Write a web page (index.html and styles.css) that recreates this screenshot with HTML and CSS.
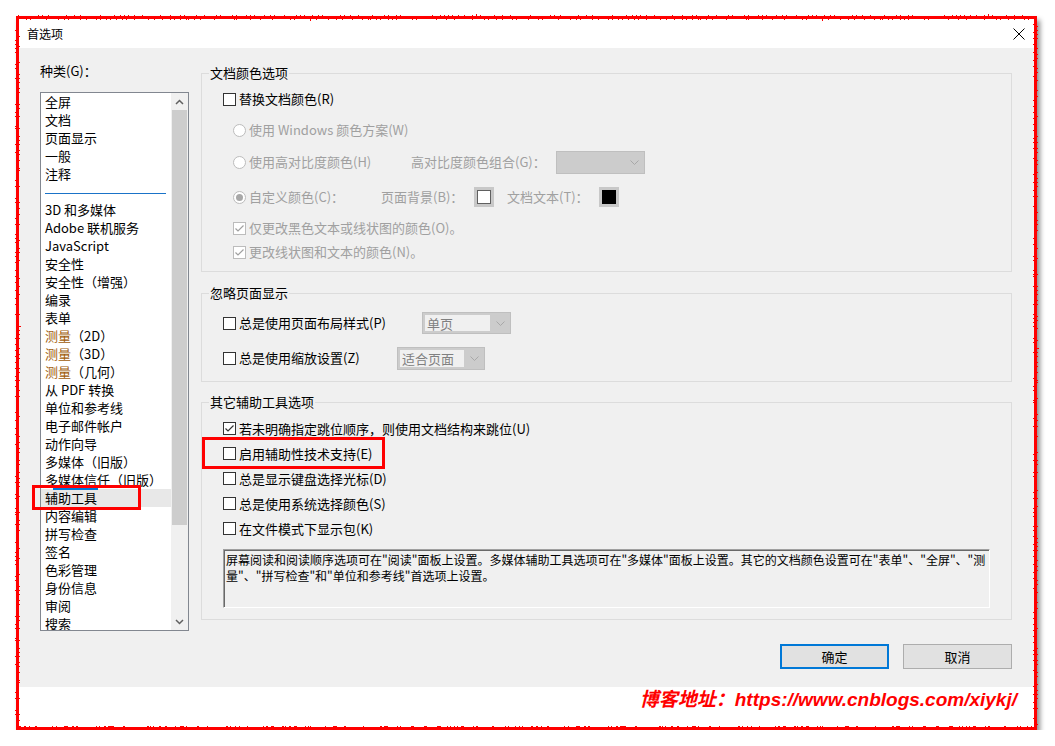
FILE: index.html
```html
<!DOCTYPE html>
<html lang="zh-CN">
<head>
  <meta charset="UTF-8" />
  <title>首选项</title>
  <link rel="stylesheet" href="styles.css">
</head>
<body>
  <!-- filtro para el borde rasgado -->
  <svg class="defs" width="0" height="0">
    <filter id="torn">
      <feTurbulence type="fractalNoise" baseFrequency="0.5" numOctaves="2" seed="7" result="noise" />
      <feDisplacementMap in="SourceGraphic" in2="noise" scale="5" xChannelSelector="R" yChannelSelector="G" result="rough" />
      <feMerge>
        <feMergeNode in="rough" />
        <feMergeNode in="SourceGraphic" />
      </feMerge>
    </filter>
  </svg>

  <div class="frame">
    <div class="titlebar">
      <span>首选项</span>
      <svg class="close" width="12" height="12" viewBox="0 0 12 12"><path d="M0.5 0.5 L11.5 11.5 M11.5 0.5 L0.5 11.5" stroke="#000" stroke-width="1" /></svg>
    </div>

    <div class="dialog">
      <div class="main">
        <!-- Categorías -->
        <div class="cat">
          <div class="cat-label">种类(G)：</div>
          <div class="list-box">
            <ul class="cat-list">
              <li>全屏</li>
              <li>文档</li>
              <li>页面显示</li>
              <li>一般</li>
              <li>注释</li>
              <li class="sep"></li>
              <li>3D 和多媒体</li>
              <li>Adobe 联机服务</li>
              <li>JavaScript</li>
              <li>安全性</li>
              <li>安全性（增强）</li>
              <li>编录</li>
              <li>表单</li>
              <li><span class="hl">测量</span>（2D）</li>
              <li><span class="hl">测量</span>（3D）</li>
              <li><span class="hl">测量</span>（几何）</li>
              <li>从 PDF 转换</li>
              <li>单位和参考线</li>
              <li>电子邮件帐户</li>
              <li>动作向导</li>
              <li>多媒体（旧版）</li>
              <li>多媒体信任（旧版）</li>
              <li class="sel">辅助工具</li>
              <li>内容编辑</li>
              <li>拼写检查</li>
              <li>签名</li>
              <li>色彩管理</li>
              <li>身份信息</li>
              <li>审阅</li>
              <li>搜索</li>
            </ul>
            <div class="scroll">
              <div class="arrow"><svg width="9" height="6" viewBox="0 0 9 6"><polyline points="1,5 4.5,1.5 8,5" fill="none" stroke="#606060" stroke-width="1.5" /></svg></div>
              <div class="thumb"></div>
              <div class="track"></div>
              <div class="arrow"><svg width="9" height="6" viewBox="0 0 9 6"><polyline points="1,1 4.5,4.5 8,1" fill="none" stroke="#606060" stroke-width="1.5" /></svg></div>
            </div>
          </div>
          <div class="mark mark-cat"></div>
        </div>

        <!-- Opciones -->
        <div class="opts">
          <div class="group g1">
            <div class="group-title">文档颜色选项</div>
            <div class="group-body">
              <div class="row"><span class="cb"></span><span>替换文档颜色(R)</span></div>
              <div class="row sub dis"><span class="rb"></span><span>使用 Windows 颜色方案(W)</span></div>
              <div class="row sub dis r3">
                <span class="rb"></span><span class="w159">使用高对比度颜色(H)</span>
                <span class="w145">高对比度颜色组合(G)：</span>
                <div class="combo w89"><span class="field empty"></span><span class="drop"><svg width="9" height="5" viewBox="0 0 9 5"><polyline points="0.5,0.5 4.5,4.5 8.5,0.5" fill="none" stroke="#a8a8a8" stroke-width="1" /></svg></span></div>
              </div>
              <div class="row sub dis r4">
                <span class="rb on"></span><span class="w132">自定义颜色(C)：</span>
                <span class="w93">页面背景(B)：</span>
                <span class="swatch"><i></i></span>
                <span class="w92 ml13">文档文本(T)：</span>
                <span class="swatch dark"><i></i></span>
              </div>
              <div class="pair">
                <div class="row sub dis"><span class="cb dis-cb"><svg width="11" height="11" viewBox="0 0 11 11"><polyline points="1.5,5.5 4,8 9.5,2.5" fill="none" stroke="#a0a0a0" stroke-width="1.2" /></svg></span><span>仅更改黑色文本或线状图的颜色(O)。</span></div>
                <div class="row sub dis"><span class="cb dis-cb"><svg width="11" height="11" viewBox="0 0 11 11"><polyline points="1.5,5.5 4,8 9.5,2.5" fill="none" stroke="#a0a0a0" stroke-width="1.2" /></svg></span><span>更改线状图和文本的颜色(N)。</span></div>
              </div>
            </div>
          </div>

          <div class="group g2">
            <div class="group-title">忽略页面显示</div>
            <div class="group-body">
              <div class="row">
                <span class="cb"></span><span class="w183">总是使用页面布局样式(P)</span>
                <div class="combo w89 h22"><span class="field">单页</span><span class="drop"><svg width="9" height="5" viewBox="0 0 9 5"><polyline points="0.5,0.5 4.5,4.5 8.5,0.5" fill="none" stroke="#a8a8a8" stroke-width="1" /></svg></span></div>
              </div>
              <div class="row">
                <span class="cb"></span><span class="w158">总是使用缩放设置(Z)</span>
                <div class="combo w88"><span class="field">适合页面</span><span class="drop"><svg width="9" height="5" viewBox="0 0 9 5"><polyline points="0.5,0.5 4.5,4.5 8.5,0.5" fill="none" stroke="#a8a8a8" stroke-width="1" /></svg></span></div>
              </div>
            </div>
          </div>

          <div class="group g3">
            <div class="group-title">其它辅助工具选项</div>
            <div class="group-body">
              <div class="row"><span class="cb"><svg width="11" height="11" viewBox="0 0 11 11"><polyline points="1.5,5.5 4,8 9.5,2.5" fill="none" stroke="#333" stroke-width="1.2" /></svg></span><span>若未明确指定跳位顺序，则使用文档结构来跳位(U)</span></div>
              <div class="row marked"><span class="cb"></span><span>启用辅助性技术支持(E)</span><div class="mark mark-row"></div></div>
              <div class="row"><span class="cb"></span><span>总是显示键盘选择光标(D)</span></div>
              <div class="row"><span class="cb"></span><span>总是使用系统选择颜色(S)</span></div>
              <div class="row"><span class="cb"></span><span>在文件模式下显示包(K)</span></div>
              <div class="info">屏幕阅读和阅读顺序选项可在"阅读"面板上设置。多媒体辅助工具选项可在"多媒体"面板上设置。其它的文档颜色设置可在"表单"、"全屏"、"测<br>量"、"拼写检查"和"单位和参考线"首选项上设置。</div>
            </div>
          </div>
        </div>
      </div>

      <div class="actions">
        <button class="btn primary">确定</button>
        <button class="btn">取消</button>
      </div>
    </div>

    <div class="footer">博客地址：https://www.cnblogs.com/xiykj/</div>
  </div>
</body>
</html>
```

FILE: styles.css
```css
/* ===== Base ===== */
* { box-sizing: border-box; margin: 0; padding: 0; }
body { font-family: "Noto Sans CJK SC", "Liberation Sans", sans-serif; font-size: 13px; color: #000; background: #fff; }
.defs { position: absolute; width: 0; height: 0; }

/* ===== Marco con borde rojo ===== */
.frame { position: relative; margin: 16px 0 0 16px; width: 1021px; height: 714px; padding: 3px; background: #fff; box-shadow: 3px 4px 5px rgba(0,0,0,0.45); display: flex; flex-direction: column; }
.frame::after { content: ""; position: absolute; inset: 0; border: 3px solid #f00; filter: url(#torn); pointer-events: none; }

.titlebar { height: 29px; flex: none; display: flex; align-items: center; justify-content: space-between; padding: 0 9px 0 8px; font-size: 12px; }
.close { display: block; }

/* ===== Diálogo ===== */
.dialog { height: 639px; flex: none; background: #f0f0f0; padding: 14px 22px 0 21px; display: flex; flex-direction: column; }
.main { display: flex; gap: 12px; }

/* Lista de categorías */
.cat { width: 149px; flex: none; position: relative; }
.cat-label { height: 18px; line-height: 18px; margin-bottom: 12px; }
.list-box { height: 539px; border: 1px solid #828790; background: #fff; display: flex; overflow: hidden; }
.cat-list { list-style: none; flex: 1; overflow: hidden; line-height: 18px; }
.cat-list li { height: 18px; padding-left: 4px; white-space: nowrap; position: relative; }
.cat-list .sep::after { content: ""; position: absolute; left: 4px; top: 10px; width: 121px; height: 1px; background: #1a73c8; }
.cat-list .sel { background: #e8e8e8; }
.cat-list .sel::before { content: ""; position: absolute; left: 12px; top: -1px; width: 45px; height: 2px; background: #0078d7; }
.hl { color: #a05c08; }

.scroll { width: 17px; flex: none; display: flex; flex-direction: column; background: #f0f0f0; }
.scroll .arrow { height: 17px; display: flex; align-items: center; justify-content: center; }
.thumb { height: 415px; margin: 0 1px; background: #cdcdcd; }
.track { flex: 1; }

/* Marcas rojas */
.mark { position: absolute; border: 3px solid #f00; pointer-events: none; }
.mark-cat { left: -8px; top: 423px; width: 109px; height: 25px; }
.mark-row { left: 0; top: -4px; width: 183px; height: 32px; }

/* ===== Grupos ===== */
.opts { width: 811px; flex: none; }
.group { border: 1px solid #dcdcdc; }
.group-title { width: fit-content; height: 18px; line-height: 18px; margin: -10px 0 0 7px; padding: 0 1px; background: #f0f0f0; }
.group-body { display: flex; flex-direction: column; }

.g1 { margin-top: 11px; }
.g1 .group-body { padding: 5px 0 7px; gap: 7px; }
.g1 .r3 { margin-top: 1px; }
.g1 .r4 { margin-top: 4px; }
.g2 { margin-top: 21px; }
.g2 .group-body { padding: 9px 0 11px; gap: 11px; }
.g3 { margin-top: 20px; }
.g3 .group-body { padding: 5px 0 11px; }
.g3 .row { height: 25px; }

.row { height: 24px; display: flex; align-items: center; gap: 3px; padding-left: 21px; white-space: nowrap; line-height: 18px; }
.row.sub { padding-left: 31px; }
.row.marked { position: relative; }
.dis { color: #a0a0a0; }

/* anchos de etiquetas */
.w159 { width: 159px; flex: none; }
.w145 { width: 142px; flex: none; }
.w132 { width: 129px; flex: none; }
.w93 { width: 90px; flex: none; }
.w92 { width: 89px; flex: none; }
.ml13 { margin-left: 10px; }
.w183 { width: 180px; flex: none; }
.w158 { width: 155px; flex: none; }

/* Casillas y radios */
.cb { width: 13px; height: 13px; flex: none; border: 1px solid #333; background: #fff; display: flex; align-items: center; justify-content: center; }
.cb svg { display: block; }
.cb.dis-cb { border-color: #bcbcbc; }
.rb { width: 13px; height: 13px; flex: none; border: 1px solid #bcbcbc; border-radius: 50%; background: #fff; display: flex; align-items: center; justify-content: center; }
.rb.on::after { content: ""; width: 7px; height: 7px; border-radius: 50%; background: #a8a8a8; }

/* Muestras de color */
.swatch { width: 20px; height: 20px; flex: none; padding: 3px; background: #c8c8c8; }
.swatch i { display: block; height: 100%; border: 1px solid #606060; background: #fff; }
.swatch.dark i { background: #000; border-color: #000; }

/* Combos deshabilitados */
.combo { height: 23px; flex: none; display: flex; border: 1px solid #bfbfbf; background: #cccccc; }
.combo.h22 { height: 22px; }
.w89 { width: 89px; }
.w88 { width: 88px; }
.combo .field { flex: 1; margin: 2px 0 2px 2px; padding-left: 2px; background: #f0f0f0; color: #808080; line-height: 17px; }
.combo .field.empty { background: transparent; }
.combo .drop { width: 20px; display: flex; align-items: center; justify-content: center; }

/* Cuadro informativo */
.info { height: 59px; margin: 8px 21px 0 21px; padding: 2px 2px; border: 1px solid; border-color: #a0a0a0 #fff #fff #a0a0a0; box-shadow: inset 1px 1px 0 #696969; font-size: 12px; line-height: 16px; white-space: nowrap; }

/* Botones */
.actions { display: flex; justify-content: flex-end; gap: 14px; margin-top: 13px; }
.btn { width: 109px; height: 25px; border: 1px solid #adadad; background: #e1e1e1; font: 13px "Noto Sans CJK SC", sans-serif; color: #000; }
.btn.primary { border: 2px solid #0078d7; }

/* Pie con la dirección del blog */
.footer { flex: 1; text-align: right; padding: 1px 17px 0 0; color: #f00; font: italic bold 19px/24px "Liberation Sans", "Noto Sans CJK SC", sans-serif; }
```
